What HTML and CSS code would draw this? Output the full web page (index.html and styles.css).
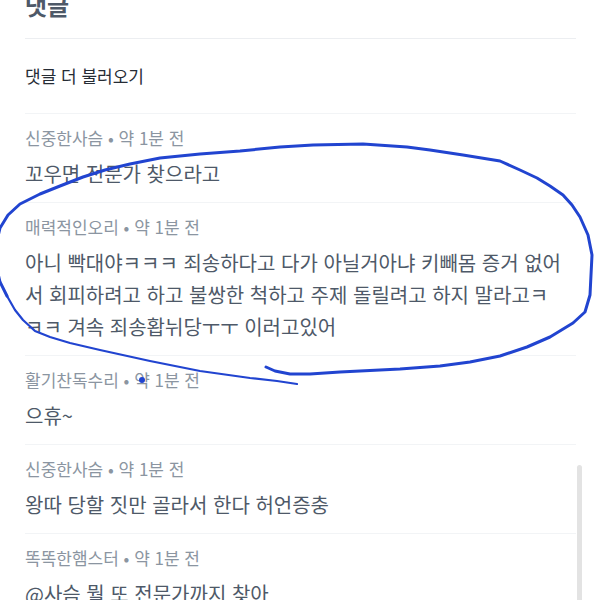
FILE: index.html
```html
<!DOCTYPE html>
<html lang="ko">
<head>
    <meta charset="UTF-8">
    <meta name="viewport" content="width=device-width, initial-scale=1.0">
    <title>댓글</title>
    <link rel="stylesheet" href="styles.css">
</head>
<body>
    <div class="page">
        <h2 class="title">댓글</h2>
        <div class="load-more">댓글 더 불러오기</div>

        <ul class="comments">
            <li class="comment">
                <div class="meta">신중한사슴 • 약 1분 전</div>
                <p class="text">꼬우면 전문가 찾으라고</p>
            </li>
            <li class="comment">
                <div class="meta">매력적인오리 • 약 1분 전</div>
                <p class="text">아니 빡대야ㅋㅋㅋ 죄송하다고 다가 아닐거아냐 키빼몸 증거 없어서 회피하려고 하고 불쌍한 척하고 주제 돌릴려고 하지 말라고ㅋㅋㅋ 겨속 죄송홥뉘당ㅜㅜ 이러고있어</p>
            </li>
            <li class="comment">
                <div class="meta">활기찬독수리 • 약 1분 전</div>
                <p class="text">으휴~</p>
            </li>
            <li class="comment">
                <div class="meta">신중한사슴 • 약 1분 전</div>
                <p class="text">왕따 당할 짓만 골라서 한다 허언증충</p>
            </li>
            <li class="comment">
                <div class="meta">똑똑한햄스터 • 약 1분 전</div>
                <p class="text">@사슴 뭘 또 전문가까지 찾아</p>
            </li>
        </ul>

        <div class="scroll-thumb"></div>

        <!-- hand-drawn marker circle over the second comment -->
        <svg class="scribble" width="600" height="600" viewBox="0 0 600 600">
            <path class="ink" d="M266 367 L275 371 L290 374 L310 374 L340 372 L400 369 L440 366 L470 362 L500 356 L527 347 L550 337 L573 323 L585 312 L590 295 L591 275 L592 255 L588 235 L580 217 L572 205 L563 195 L550 186 L537 178 L520 170 L500 161 L463 155 L430 150 L407 147 L363 144 L313 145 L280 147 L240 151 L200 154 L160 158 L130 164 L105 170 L83 177 L60 186 L40 194 L20 204 L8 215 L0 228 L-4 245 L-4 265 L0 282 L7 296"/>
            <path class="ink thin" d="M7 296 L15 310 L23 320 L35 331 L50 337 L70 343 L100 350 L150 361 L200 371 L250 378 L277 381 L297 384"/>
            <circle class="dot" cx="142" cy="380" r="3"/>
        </svg>
    </div>
</body>
</html>
```

FILE: styles.css
```css
body {
    margin: 0;
    font-family: "Noto Sans CJK KR", "Noto Sans", sans-serif;
    background: #fff;
}
.page {
    position: relative;
    height: 600px;
    overflow: hidden;
    padding: 0 24px 0 25px;
}
.title {
    margin: -10px 0 0;
    padding-bottom: 18px;
    font-size: 24px;
    line-height: 30px;
    font-weight: 700;
    color: #4e5968;
    border-bottom: 1px solid #eceef1;
}
.load-more {
    padding: 25px 0;
    font-size: 17px;
    line-height: 24px;
    color: #262c35;
    border-bottom: 1px solid #f2f4f6;
}
.comments {
    list-style: none;
    margin: 0;
    padding: 0;
}
.comment {
    padding: 13px 0 12px;
    border-bottom: 1px solid #f2f4f6;
}
.meta {
    font-size: 17px;
    line-height: 22px;
    color: #8b95a1;
}
.text {
    margin: 9px 12px 0 0;
    font-size: 20px;
    line-height: 32px;
    color: #4e5968;
}
.scroll-thumb {
    position: absolute;
    left: 577px;
    top: 465px;
    width: 5px;
    height: 200px;
    border-radius: 3px;
    background: #e3e3e3;
}
.scribble {
    position: absolute;
    top: 0;
    left: 0;
    pointer-events: none;
}
.ink {
    fill: none;
    stroke: #2144d0;
    stroke-width: 3;
    stroke-linecap: round;
    stroke-linejoin: round;
}
.ink.thin {
    stroke-width: 2.2;
}
.dot {
    fill: #2144d0;
}
```
